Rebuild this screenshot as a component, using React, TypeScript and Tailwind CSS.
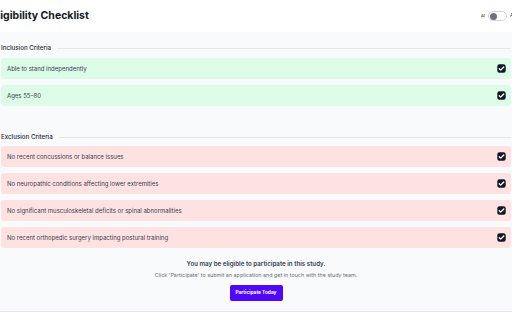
import React from 'react';

const inclusion = ['Able to stand independently', 'Ages 55–80'];
const exclusion = [
  'No recent concussions or balance issues',
  'No neuropathic conditions affecting lower extremities',
  'No significant musculoskeletal deficits or spinal abnormalities',
  'No recent orthopedic surgery impacting postural training',
];

const CheckMark: React.FC = () => (
  <svg width="9" height="9" viewBox="0 0 16 16" className="shrink-0">
    <rect x="0.5" y="0.5" width="15" height="15" rx="4" fill="#111827" />
    <path d="M4 8.3l2.6 2.6L12 5.4" fill="none" stroke="#fff" strokeWidth="2.4" strokeLinecap="round" strokeLinejoin="round" />
  </svg>
);

const SectionHeading: React.FC<{ label: string; className?: string }> = ({ label, className }) => (
  <div className={`flex h-[14px] items-center gap-[6px] ${className ?? ''}`}>
    <span className="text-[6.2px] font-medium text-[#1f2937]">{label}</span>
    <div className="h-px flex-1 bg-[#e5e7eb]" />
  </div>
);

const Row: React.FC<{ text: string; tone: 'green' | 'red' }> = ({ text, tone }) => (
  <div
    className={`flex h-[21px] items-center justify-between rounded-[3px] pl-[6px] pr-[5px] ${
      tone === 'green' ? 'bg-[#dcfce7]' : 'bg-[#fee2e2]'
    }`}
  >
    <span className="text-[6px] text-[#374151]">{text}</span>
    <CheckMark />
  </div>
);

export default function App() {
  return (
    <div className="h-[320px] w-[512px] overflow-hidden bg-white font-['Inter','Liberation_Sans',sans-serif]">
      {/* Header */}
      <div className="flex h-[32px] items-center justify-between">
        <h1 className="-ml-[9px] text-[10.5px] font-bold text-[#111827]">Eligibility Checklist</h1>
        <div className="-mr-[13px] flex items-center gap-[3px]">
          <span className="text-[4px] font-medium text-[#374151]">AI</span>
          <div className="flex h-[10px] w-[19px] items-center rounded-full border border-[#d1d5db] bg-white px-[1px]">
            <div className="h-[7px] w-[7px] rounded-full bg-[#6b7280]" />
          </div>
          <span className="text-[5px] text-[#374151]">Admin</span>
        </div>
      </div>

      {/* Main */}
      <div className="flex h-[280px] flex-col border-b border-[#e5e7eb] bg-[#f9fafb] px-[1px] pt-[9px]">
        <SectionHeading label="Inclusion Criteria" className="mb-[3px]" />
        <div className="flex flex-col gap-[6px]">
          {inclusion.map((t) => (
            <Row key={t} text={t} tone="green" />
          ))}
        </div>

        <SectionHeading label="Exclusion Criteria" className="mb-[2px] mt-[24px]" />
        <div className="flex flex-col gap-[6px]">
          {exclusion.map((t) => (
            <Row key={t} text={t} tone="red" />
          ))}
        </div>

        <div className="mt-[12px] flex flex-col items-center">
          <p className="text-[6.2px] leading-[8px] font-semibold text-[#374151]">
            You may be eligible to participate in this study.
          </p>
          <p className="mt-[4px] text-[5.4px] leading-[7px] text-[#6b7280]">
            Click 'Participate' to submit an application and get in touch with the study team.
          </p>
          <button className="mt-[6px] flex h-[16px] w-[53px] items-center justify-center rounded-[2px] bg-[#4f06f9] text-[4.8px] font-bold text-white">
            Participate Today
          </button>
        </div>
      </div>
    </div>
  );
}
